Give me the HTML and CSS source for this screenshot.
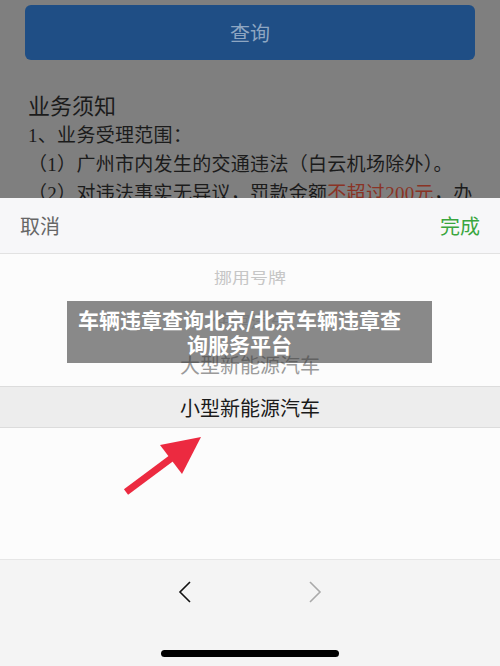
FILE: index.html
```html
<!DOCTYPE html>
<html lang="zh-CN">
<head>
  <meta charset="UTF-8">
  <meta name="viewport" content="width=device-width, initial-scale=1.0">
  <title>车辆违章查询</title>
  <link rel="stylesheet" href="styles.css">
</head>
<body>
  <div class="screen">
    <section class="behind">
      <button class="query-btn">查询</button>
      <h2 class="notice-title">业务须知</h2>
      <p class="notice-line">1、业务受理范围：</p>
      <p class="notice-line sub">（1）广州市内发生的交通违法（白云机场除外）。</p>
      <p class="notice-line sub">（2）对违法事实无异议，罚款金额<span class="warn">不超过200元</span>，办</p>
    </section>

    <div class="sheet-head">
      <span class="cancel">取消</span>
      <span class="done">完成</span>
    </div>

    <div class="picker">
      <div class="opt far">挪用号牌</div>
      <div class="opt mid">使馆汽车</div>
      <div class="opt near">大型新能源汽车</div>
      <div class="opt selected">小型新能源汽车</div>
      <svg class="arrow" width="100" height="70" viewBox="0 0 100 70">
        <line x1="5" y1="55" x2="52" y2="20" stroke="#ec2a40" stroke-width="7"/>
        <polygon points="80,0 39,8 61,37" fill="#ec2a40"/>
      </svg>
    </div>

    <div class="toolbar">
      <div class="chevrons">
        <svg width="14" height="22" viewBox="0 0 14 22"><polyline points="12,1 2,11 12,21" fill="none" stroke="#111" stroke-width="1.6"/></svg>
        <svg width="14" height="22" viewBox="0 0 14 22"><polyline points="2,1 12,11 2,21" fill="none" stroke="#aaa" stroke-width="1.6"/></svg>
      </div>
      <div class="home-bar"></div>
    </div>

    <div class="banner">车辆违章查询北京/北京车辆违章查询服务平台</div>
  </div>
</body>
</html>
```

FILE: styles.css
```css
*, *::before, *::after { box-sizing: border-box; margin: 0; padding: 0; }
body { font-family: "Noto Sans CJK SC", sans-serif; background: #f4f4f4; }

.screen { position: relative; width: 500px; height: 666px; display: flex; flex-direction: column; overflow: hidden; }

.behind { height: 198px; overflow: hidden; background: #7f7f7f; padding: 5px 25px 0; color: #1b1b1b; }
.query-btn { display: block; width: 100%; height: 55px; border: none; border-radius: 6px; background: #1f4e85; color: #8ea6c2; font-family: inherit; font-size: 20px; }
.notice-title { font-weight: normal; font-size: 22px; line-height: 30px; margin: 29px 0 0 3px; }
.notice-line { font-family: "Liberation Serif", "Noto Sans CJK SC", serif; font-size: 19px; line-height: 29px; margin-left: 3px; white-space: nowrap; letter-spacing: 0.3px; }
.notice-line:first-of-type { margin-top: 2px; }
.warn { color: #8a3325; }

.sheet-head { height: 56px; background: #f7f7f9; border-bottom: 1px solid #e2e2e2; display: flex; justify-content: space-between; align-items: center; padding: 0 20px; font-size: 20px; }
.cancel { color: #666; }
.done { color: #3aa63e; }

.picker { position: relative; height: 305px; background: #fcfcfc; }
.opt { height: 44px; display: flex; align-items: center; justify-content: center; font-size: 20px; }
.opt.far { color: #c6c6c6; font-size: 18px; transform: scaleY(0.85); }
.opt.mid { color: #d4d4d4; font-size: 19px; transform: scaleY(0.9); }
.opt.near { color: #9a9a9a; }
.opt.selected { height: 42px; color: #1a1a1a; background: #ededed; border-top: 1px solid #dcdcdc; border-bottom: 1px solid #dcdcdc; }
.arrow { position: absolute; left: 121px; top: 183px; }

.toolbar { height: 107px; background: #f4f4f4; border-top: 1px solid #e6e6e6; display: flex; flex-direction: column; align-items: center; padding-top: 21px; }
.chevrons { display: flex; gap: 116px; }
.home-bar { width: 178px; height: 7px; border-radius: 4px; background: #000; margin-top: 47px; }

.banner { position: absolute; left: 67px; top: 301px; width: 365px; height: 62px; background: rgba(60, 60, 60, 0.6); color: #fff; font-weight: bold; font-size: 21px; line-height: 25px; text-align: center; padding: 6px 30px 0 10px; }
```
